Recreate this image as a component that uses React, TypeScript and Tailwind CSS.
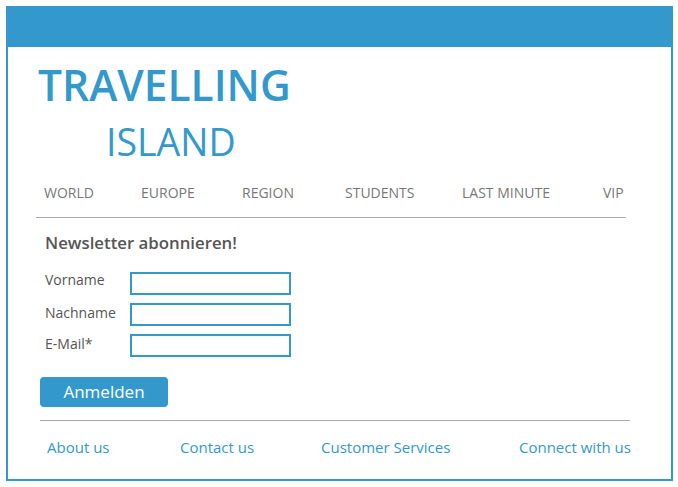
export default function App() {
  const font = { fontFamily: '"Open Sans", "Noto Sans", sans-serif' };
  const nav: [string, string][] = [
    ["WORLD", "w-[97px]"],
    ["EUROPE", "w-[101px]"],
    ["REGION", "w-[103px]"],
    ["STUDENTS", "w-[117px]"],
    ["LAST MINUTE", "w-[141px]"],
    ["VIP", "w-auto"],
  ];
  const footer: [string, string][] = [
    ["About us", "w-[133px]"],
    ["Contact us", "w-[141px]"],
    ["Customer Services", "w-[198px]"],
    ["Connect with us", "w-auto"],
  ];
  return (
    <div className="w-[678px] h-[487px] bg-white pt-[6px] pl-[6px]" style={font}>
      <div className="w-[667px] h-[475px] border-2 border-[#3399cc] flex flex-col">
        <div className="h-[39px] bg-[#3399cc] shrink-0" />
        <div className="pl-[30px] pt-[14px] text-[#3399cc]">
          <div className="text-[42.5px] font-semibold leading-[48px]">TRAVELLING</div>
          <div className="text-[37.5px] font-normal leading-[48px] pl-[68px] mt-[9px]">ISLAND</div>
        </div>
        <div className="ml-[28px] w-[590px] mt-[17px] border-b border-[#aaaaaa] pb-[14px]">
          <div className="flex pl-[8px] text-[14px] text-[#777777] leading-[20px]">
            {nav.map(([t, w]) => (
              <div key={t} className={w}>{t}</div>
            ))}
          </div>
        </div>
        <div className="pl-[37px] pt-[14px] text-[#555555]">
          <div className="text-[16.8px] font-semibold leading-[22px]">Newsletter abonnieren!</div>
          <div className="flex flex-col gap-[8px] mt-[18px]">
            {["Vorname", "Nachname", "E-Mail*"].map((l, i) => (
              <div key={l} className="flex items-start">
                <div className={`w-[85px] text-[14px] leading-[20px] ${i === 0 ? "mt-[-2px]" : ""}`}>{l}</div>
                <div className="w-[161px] h-[23px] border-2 border-[#3399cc] bg-white" />
              </div>
            ))}
          </div>
          <div className="mt-[20px] -ml-[5px] w-[128px] h-[30px] rounded-[4px] bg-[#3399cc] text-white text-[17px] flex items-center justify-center">
            Anmelden
          </div>
        </div>
        <div className="ml-[32px] w-[590px] mt-[13px] border-t border-[#aaaaaa]" />
        <div className="flex pl-[39px] mt-[15px] text-[15px] text-[#3399cc] leading-[22px]">
          {footer.map(([t, w]) => (
            <div key={t} className={w}>{t}</div>
          ))}
        </div>
      </div>
    </div>
  );
}
